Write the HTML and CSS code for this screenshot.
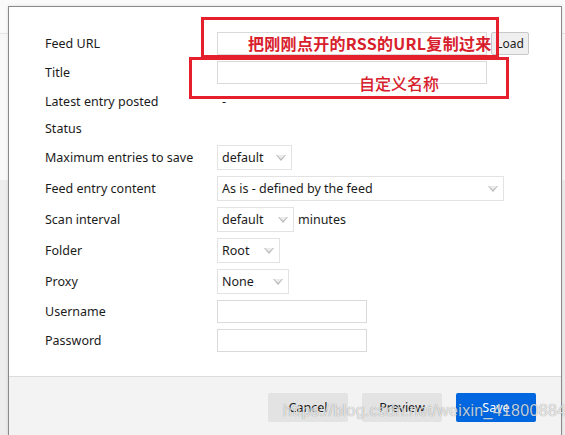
FILE: index.html
```html
<!DOCTYPE html>
<html lang="en">

<head>
    <meta charset="UTF-8">
    <title>Subscribe to feed</title>
    <link rel="stylesheet" href="styles.css">
</head>

<body>
    <div class="dialog">
        <div class="form">
            <label class="label">Feed URL</label>
            <div class="field">
                <input class="text-input url-input" type="text">
                <button class="load-btn">Load</button>
            </div>

            <label class="label">Title</label>
            <div class="field">
                <input class="text-input url-input" type="text">
            </div>

            <span class="label">Latest entry posted</span>
            <span class="value">-</span>

            <span class="label">Status</span>
            <span class="value"></span>

            <label class="label">Maximum entries to save</label>
            <div class="field">
                <div class="select w-75"><span>default</span><i class="arrow"></i></div>
            </div>

            <label class="label">Feed entry content</label>
            <div class="field">
                <div class="select w-287"><span>As is - defined by the feed</span><i class="arrow"></i></div>
            </div>

            <label class="label">Scan interval</label>
            <div class="field">
                <div class="select w-77"><span>default</span><i class="arrow"></i></div>
                <span class="unit">minutes</span>
            </div>

            <label class="label">Folder</label>
            <div class="field">
                <div class="select w-63"><span>Root</span><i class="arrow"></i></div>
            </div>

            <label class="label">Proxy</label>
            <div class="field">
                <div class="select w-72"><span>None</span><i class="arrow"></i></div>
            </div>

            <label class="label">Username</label>
            <div class="field">
                <input class="text-input short-input" type="text">
            </div>

            <label class="label">Password</label>
            <div class="field">
                <input class="text-input short-input" type="password">
            </div>
        </div>

        <div class="footer">
            <button class="btn">Cancel</button>
            <button class="btn">Preview</button>
            <button class="btn btn-primary">Save</button>
        </div>
    </div>

    <!-- red annotations drawn on top of the screenshot -->
    <div class="note note-url"><span>把刚刚点开的RSS的URL复制过来</span></div>
    <div class="note note-title"><span>自定义名称</span></div>

    <div class="watermark">https://blog.csdn.net/weixin_41800884</div>
</body>
</html>
```

FILE: styles.css
```css
body {
    margin: 0;
    height: 435px;
    overflow: hidden;
    font-family: 'Noto Sans', 'Open Sans', sans-serif;
    font-size: 12.5px;
    color: #1b1b1b;
    background: linear-gradient(to bottom, #fafafa 0, #fafafa 33px, #e6e6e6 33px, #e6e6e6 34px, #f8f8f8 34px, #f8f8f8 180px, #ededed 180px);
}

.dialog {
    margin: 6px 3px 0 8px;
    height: 440px;
    background-color: #ffffff;
    border: 1px solid #8a8a8a;
    border-bottom: none;
    box-shadow: 0 0 3px rgba(0, 0, 0, 0.12);
    display: flex;
    flex-direction: column;
}

.form {
    display: grid;
    grid-template-columns: 172px 1fr;
    grid-template-rows: 29px 29px 29px 26px repeat(5, 31px) 29px 29px;
    align-items: center;
    padding: 22px 0 0 36px;
    height: 346px;
    box-sizing: border-box;
}

.label {
    line-height: 18px;
}

.value {
    padding-left: 5px;
    line-height: 18px;
}

.field {
    display: flex;
    align-items: center;
}

.text-input {
    height: 23px;
    box-sizing: border-box;
    border: 1px solid #dadada;
    background: #ffffff;
    padding: 0 4px;
    margin: 0;
    font: inherit;
}

.url-input {
    width: 270px;
}

.short-input {
    width: 150px;
}

.load-btn {
    margin-left: 4px;
    height: 23px;
    width: 38px;
    padding: 0;
    border: 1px solid #c8c8c8;
    border-radius: 2px;
    background-color: #efefef;
    font-family: 'Noto Sans', sans-serif;
    font-size: 12px;
    color: #222;
}

.select {
    height: 25px;
    box-sizing: border-box;
    border: 1px solid #e3e3e3;
    display: flex;
    align-items: center;
    justify-content: space-between;
    padding: 0 5px 0 4px;
}

.w-75 { width: 75px; }
.w-287 { width: 287px; }
.w-77 { width: 77px; }
.w-63 { width: 63px; }
.w-72 { width: 72px; }

.arrow {
    width: 0;
    height: 0;
    border-left: 5px solid transparent;
    border-right: 5px solid transparent;
    border-top: 6px solid #b9b9b9;
    position: relative;
}

.arrow::after {
    content: "";
    position: absolute;
    left: -4px;
    top: -6px;
    border-left: 4px solid transparent;
    border-right: 4px solid transparent;
    border-top: 4px solid #ececec;
}

.unit {
    margin-left: 4px;
}

.footer {
    flex: 1;
    margin-top: 23px;
    border-top: 1px solid #dcdcdc;
    background-color: #f3f3f3;
    display: flex;
    justify-content: flex-end;
    align-items: flex-start;
    gap: 14px;
    padding: 16px 25px 0 0;
}

.btn {
    width: 80px;
    height: 29px;
    border: none;
    border-radius: 2px;
    background-color: #e3e3e3;
    font-family: 'Noto Sans', sans-serif;
    font-size: 12.5px;
    color: #1b1b1b;
}

.btn-primary {
    background-color: #0067e0;
    color: #ffffff;
}

.note {
    position: absolute;
    border: 3px solid #e5202c;
    box-sizing: border-box;
    font-family: 'Noto Sans CJK SC', sans-serif;
    color: #d8202c;
    font-size: 16px;
    line-height: 18px;
}

.note-url {
    left: 201px;
    top: 17px;
    width: 298px;
    height: 41px;
    font-weight: bold;
}

.note-url span {
    position: absolute;
    left: 44px;
    top: 14px;
    letter-spacing: 0.3px;
    white-space: nowrap;
}

.note-title {
    left: 189px;
    top: 57px;
    width: 320px;
    height: 42px;
    font-weight: 500;
}

.note-title span {
    position: absolute;
    left: 167px;
    top: 14px;
}

.watermark {
    position: absolute;
    left: 283px;
    top: 402px;
    font-family: 'Liberation Sans', sans-serif;
    font-size: 16px;
    letter-spacing: 0.3px;
    color: rgba(255, 255, 255, 0.75);
    text-shadow: 0 0 1px rgba(0, 0, 0, 0.45);
    white-space: nowrap;
}
```
